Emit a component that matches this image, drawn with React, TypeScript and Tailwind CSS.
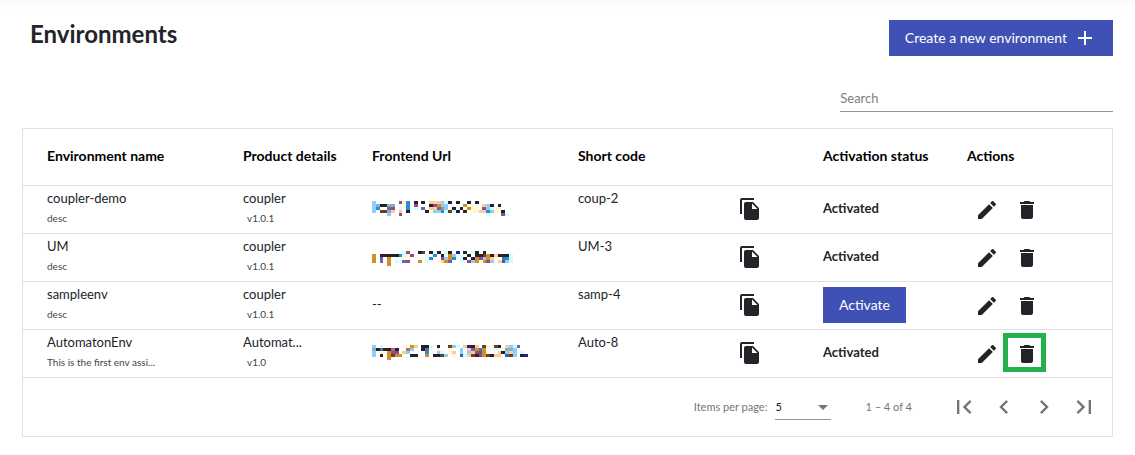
import { useState } from "react";
import {
  MdAdd,
  MdArrowDropDown,
  MdChevronLeft,
  MdChevronRight,
  MdDelete,
  MdEdit,
  MdFileCopy,
  MdFirstPage,
  MdLastPage,
} from "react-icons/md";

const palette: Record<string, string> = {
  k: "#20232a",
  b: "#90cdff",
  B: "#2490cf",
  g: "#8bafbf",
  p: "#95488c",
  v: "#6567b4",
  n: "#3565a8",
  N: "#2020a0",
  o: "#ffcd91",
  O: "#cf9124",
  y: "#fffad5",
  c: "#cdffff",
  w: "#6a401e",
  m: "#3d1d22",
  r: "#b06a80",
};

// Masked urls, one character per colored cell
const masks = {
  coupler: [
    "b......pyB.k.k.ooobck.k..k.k........",
    "bgkkgg.y.B.p...kpObb....O.y..obk.k..",
    "bB..vp.c.B.c.v.oovOb.k.k.Oyy.pbcyy..",
    "b.wwgo.o.k....kybbBcwck.m.yyooBbyyk.",
    "....b..p......................c...pc",
  ],
  um: [
    ".........y...........................",
    "........cp..kw.k.k.ck.N.k.ck.k.......",
    "O.kmkkkBcyp...c.B.k.Ob.c.k.kmwOkokkkc",
    "O.v.O...yy.....B..pbOB.ck.kOpbOoy.vBc",
    "O.v.O.c.vp..O.c..yoOv..c.pbOyOpb.onbc",
    "....O................................",
  ],
  automaton: [
    "b.c.....yyOo.kkc.k..wbc.oNmo.wy.wk.obcv..",
    "gkvmkrk..rb..kvy.y..y..b.ovOvO..c.yggb...",
    "b.y.Opp.ob....B..bc.yo.b.bopnOy..okbob.c.",
    "b.k.OwOO..kk..O.kkwb.y.ncowmpOwkoo.nwb.kN",
    "....O....................................",
  ],
};

const environments = [
  { name: "coupler-demo", desc: "desc", product: "coupler", version: "v1.0.1", url: masks.coupler, code: "coup-2", active: true },
  { name: "UM", desc: "desc", product: "coupler", version: "v1.0.1", url: masks.um, code: "UM-3", active: true },
  { name: "sampleenv", desc: "desc", product: "coupler", version: "v1.0.1", url: null, code: "samp-4", active: false },
  { name: "AutomatonEnv", desc: "This is the first env assi...", product: "Automat...", version: "v1.0", url: masks.automaton, code: "Auto-8", active: true, marked: true },
];

function MaskedUrl({ rows }: { rows: string[] }) {
  const width = rows[0].length * 4;
  const height = rows.length * 3;
  return (
    <svg
      width={Math.round(width * 0.95)}
      height={height}
      viewBox={`0 0 ${width} ${height}`}
      preserveAspectRatio="none"
      shapeRendering="crispEdges"
      aria-hidden="true"
    >
      {rows.map((row, y) =>
        row
          .split("")
          .map((cell, x) =>
            palette[cell] ? (
              <rect key={`${x}-${y}`} x={x * 4} y={y * 3} width="4" height="3" fill={palette[cell]} />
            ) : null
          )
      )}
    </svg>
  );
}

function IconButton({ label, children }: { label: string; children: any }) {
  return (
    <button type="button" aria-label={label} className="flex size-10 items-center justify-center">
      {children}
    </button>
  );
}

export default function App() {
  const [search, setSearch] = useState("");
  const [pageSize, setPageSize] = useState("5");

  return (
    <div className="bg-white bg-linear-to-b from-[#fafafa] to-white to-[10px] px-[22px] pt-5 pb-4 font-['Lato',sans-serif] text-sm text-[#212529]">
      <header className="flex items-start justify-between">
        <h1 className="pl-2 text-2xl leading-7 font-bold">Environments</h1>
        <button type="button" className="flex h-9 items-center gap-1.5 bg-[#3f51b5] px-4 text-white">
          Create a new environment
          <MdAdd size={24} />
        </button>
      </header>

      <div className="mt-7 flex justify-end">
        <input
          type="text"
          aria-label="Search"
          placeholder="Search"
          value={search}
          onChange={(e) => setSearch(e.target.value)}
          className="h-7 w-1/4 border-b border-[#949494] text-[13px] outline-none placeholder:text-[#808080]"
        />
      </div>

      <div className="mt-4 border border-[#dee2e6]">
        <table className="w-full table-fixed border-separate border-spacing-0 pr-px text-left">
          <colgroup>
            <col className="w-[220px]" />
            <col className="w-[129px]" />
            <col className="w-[206px]" />
            <col className="w-[160px]" />
            <col className="w-[85px]" />
            <col className="w-[144px]" />
            <col className="w-[145px]" />
          </colgroup>
          <thead>
            <tr className="h-[57px] text-black [&>th]:border-b [&>th]:border-[#dfdfdf] [&>th]:pb-0.5 [&>th]:font-bold">
              <th className="pl-6">Environment name</th>
              <th>Product details</th>
              <th>Frontend Url</th>
              <th>Short code</th>
              <th></th>
              <th>Activation status</th>
              <th>Actions</th>
            </tr>
          </thead>
          <tbody>
            {environments.map((env) => (
              <tr key={env.name} className="h-12 text-[13px] [&>td]:border-b [&>td]:border-[#dfdfdf]">
                <td className="pt-0.5 pl-6 align-top leading-5">
                  <div>{env.name}</div>
                  <div className="text-[10px] leading-5 text-[#444]">{env.desc}</div>
                </td>
                <td className="pt-0.5 align-top leading-5">
                  <div>{env.product}</div>
                  <div className="pl-1 text-[10px] leading-5 text-[#444]">{env.version}</div>
                </td>
                <td className="pb-0.5">{env.url ? <MaskedUrl rows={env.url} /> : "--"}</td>
                <td className="pt-0.5 align-top leading-5">{env.code}</td>
                <td className="pb-0.5">
                  <button type="button" aria-label="Copy" className="block">
                    <MdFileCopy size={24} />
                  </button>
                </td>
                <td className="pb-0.5 font-bold">
                  {env.active ? (
                    "Activated"
                  ) : (
                    <button type="button" className="block h-9 bg-[#3f51b5] px-4 text-sm font-normal text-white">
                      Activate
                    </button>
                  )}
                </td>
                <td>
                  <div className="flex">
                    <IconButton label="Edit">
                      <MdEdit size={24} />
                    </IconButton>
                    <div className="relative">
                      <IconButton label="Delete">
                        <MdDelete size={24} />
                      </IconButton>
                      {env.marked && (
                        <span className="pointer-events-none absolute -top-px right-px bottom-0.5 -left-1 border-5 border-[#22b14c]" />
                      )}
                    </div>
                  </div>
                </td>
              </tr>
            ))}
          </tbody>
        </table>

        <div className="flex h-[58px] items-center justify-end pr-2 text-[11px] text-[#757575]">
          <label htmlFor="page-size">Items per page:</label>
          <div className="relative ml-2 w-14 border-b border-[#949494]">
            <select
              id="page-size"
              value={pageSize}
              onChange={(e) => setPageSize(e.target.value)}
              className="h-6 w-full appearance-none text-[#222] outline-none"
            >
              <option>5</option>
              <option>10</option>
              <option>25</option>
            </select>
            <MdArrowDropDown size={24} className="pointer-events-none absolute -right-1 top-0" />
          </div>
          <span className="mx-8 pl-0.5">1 – 4 of 4</span>
          <IconButton label="First page">
            <MdFirstPage size={28} />
          </IconButton>
          <IconButton label="Previous page">
            <MdChevronLeft size={28} />
          </IconButton>
          <IconButton label="Next page">
            <MdChevronRight size={28} />
          </IconButton>
          <IconButton label="Last page">
            <MdLastPage size={28} />
          </IconButton>
        </div>
      </div>
    </div>
  );
}
